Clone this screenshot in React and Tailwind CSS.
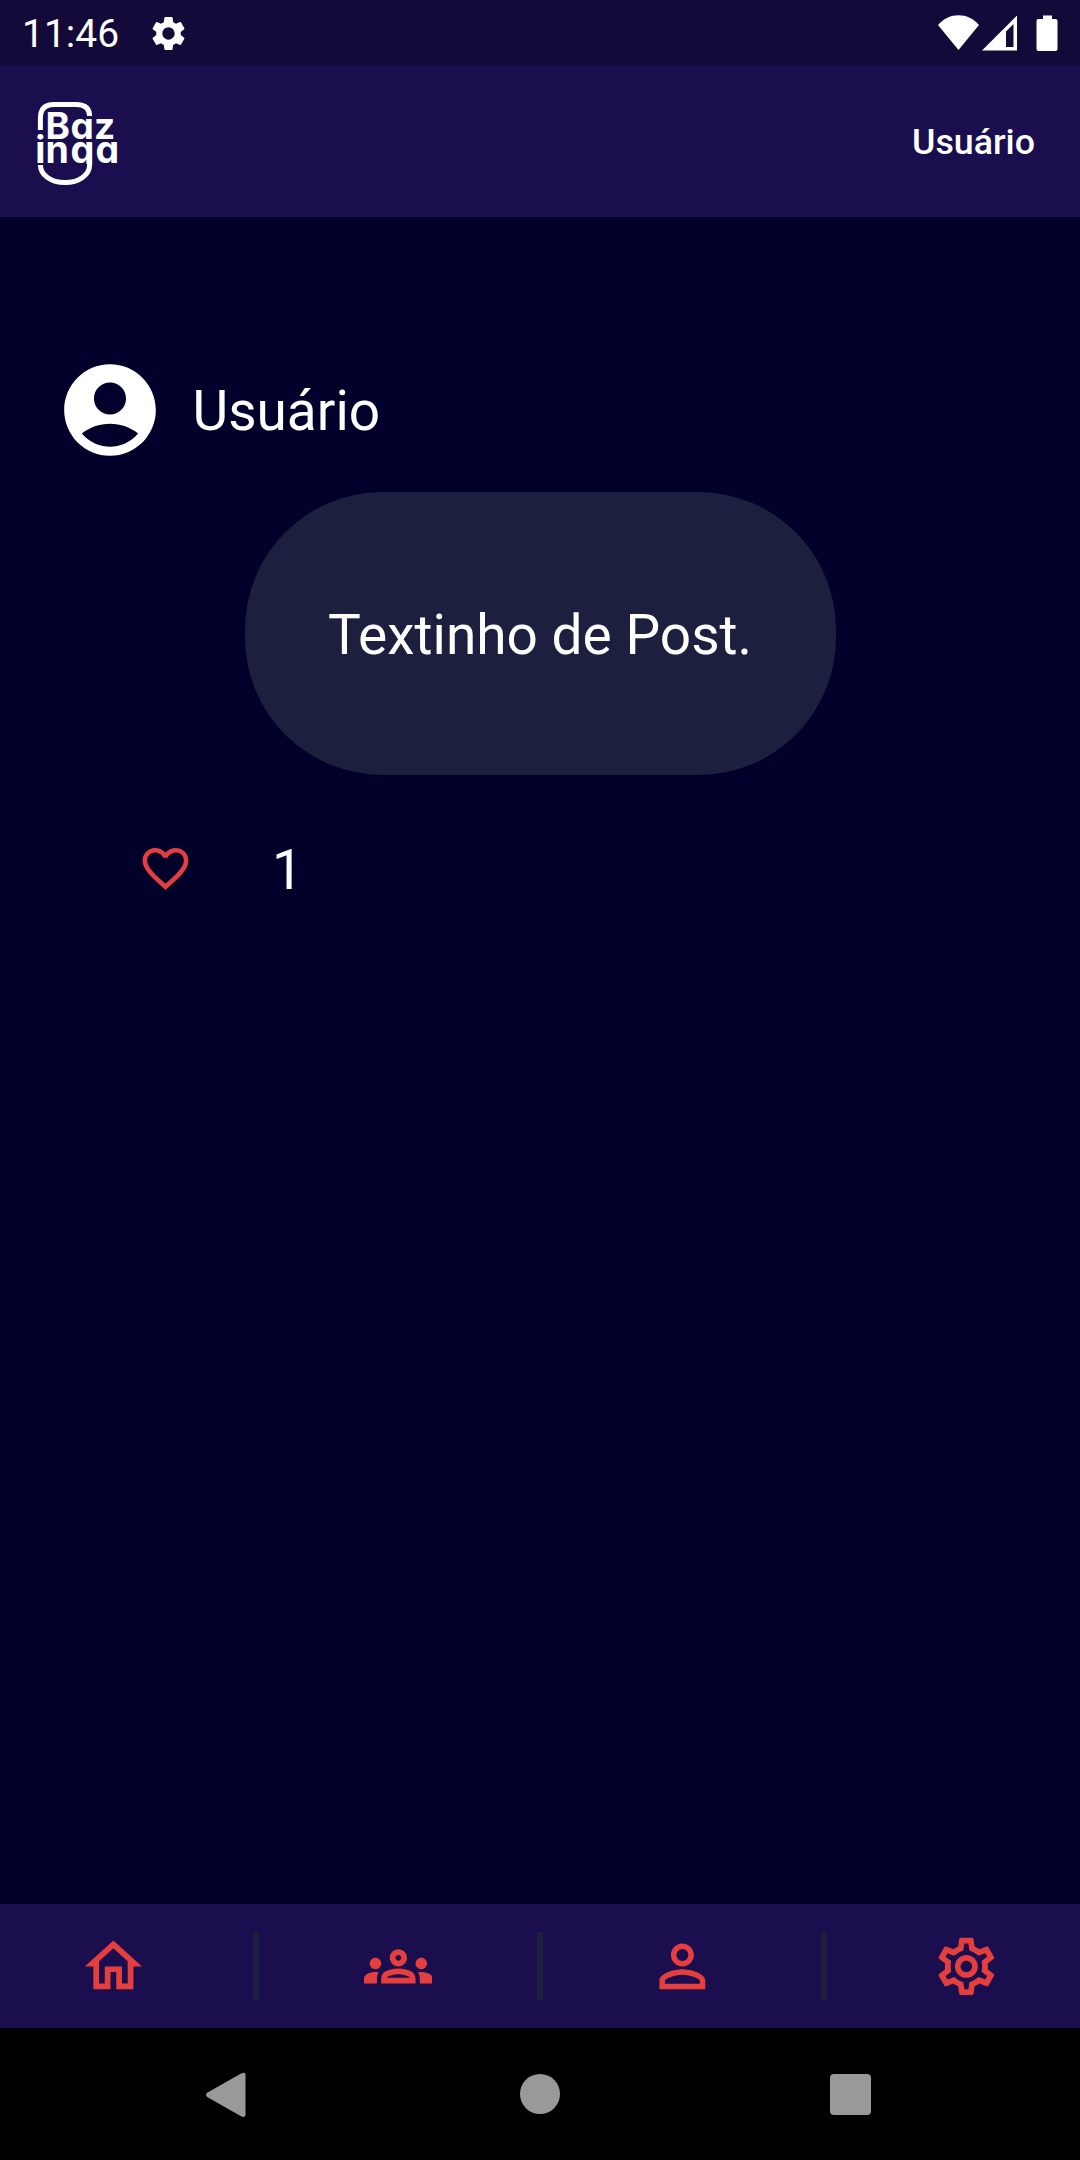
import { MdOutlineHome, MdOutlineGroups, MdPersonOutline, MdOutlineSettings, MdFavoriteBorder, MdSettings } from "react-icons/md";

function Logo() {
  return (
    <svg className="mt-[3px] h-[90px] w-[90px] text-white" viewBox="34 98 90 90" role="img" aria-label="Bazinga">
      <defs>
        <clipPath id="word-clip">
          <rect x="34" y="98" width="90" height="66" />
        </clipPath>
      </defs>
      <g fill="none" stroke="currentColor" strokeWidth="5">
        <path d="M40.400 130V118Q40.400 104.400 54 104.400H76Q89.600 104.400 89.600 116" />
        <path d="M40.400 165C40.400 175 51 182.600 65 182.600S89.600 175 89.600 165V143" />
      </g>
      <g
        fill="currentColor"
        clipPath="url(#word-clip)"
        className="font-['Inter'] text-[37.5px] font-bold [font-feature-settings:'cv11']"
      >
        <text className="text-[37px]" x="45.500 70.600 94" y="138.800">Baz</text>
        <text x="35.300 45.500 70.600 95.500" y="162.600">inga</text>
      </g>
    </svg>
  );
}

function StatusBar() {
  return (
    <div className="flex h-[66px] items-center bg-[#130a39] pl-[22px] pr-[22px] text-white">
      <span className="mt-[3px] w-[97px] text-[39px] leading-none">11:46</span>
      <MdSettings className="ml-[29px] size-[41px]" />
      <div className="ml-auto flex items-center">
        <svg className="h-[36px] w-[120px]" viewBox="0 0 120 36" fill="currentColor">
          <path d="M0 10C11-3 30-3 41 10L20.5 35Z" />
          <path fillRule="evenodd" d="M44 35.500L79 0.500V35.500ZM68 32H75.500V9L68 16.500Z" />
          <path d="M105 0.500h9v3.500h3.500q2 0 2 2v28q0 2-2 2h-17q-2 0-2-2v-28q0-2 2-2h4.500z" />
        </svg>
      </div>
    </div>
  );
}

function Header() {
  return (
    <header className="flex h-[151px] items-center justify-between bg-[#1a0e4f] pl-[34px] pr-[45px] text-white">
      <Logo />
      <span className="mt-[2px] text-[35.75px] font-medium leading-none">Usuário</span>
    </header>
  );
}

function Post() {
  return (
    <main className="flex flex-1 flex-col bg-[#02002a] pt-[138px] text-[55px] leading-[64px] text-white">
      <div className="flex h-[110px] items-center pl-[55px]">
        <svg className="size-[110px]" viewBox="0 0 24 24" fill="currentColor">
          <path d="M12 2C6.480 2 2 6.480 2 12s4.480 10 10 10 10-4.480 10-10S17.520 2 12 2zm0 4c1.930 0 3.500 1.570 3.500 3.500S13.930 13 12 13s-3.500-1.570-3.500-3.500S10.070 6 12 6zm0 14c-2.030 0-4.430-.82-6.140-2.880C7.550 15.800 9.680 15 12 15s4.450.8 6.140 2.120C16.430 19.180 14.030 20 12 20z" />
        </svg>
        <span className="ml-[27.5px] pt-[2px]">Usuário</span>
      </div>
      <div className="mt-[27px] flex h-[283px] w-[591px] items-center justify-center self-center rounded-[137.5px] bg-[#1d1f3e] pt-[2px]">
        Textinho de Post.
      </div>
      <div className="mt-[61px] flex h-[64px] items-center pl-[137.5px]">
        <MdFavoriteBorder className="size-[55px] text-[#e53e3e]" />
        <span className="ml-[79.5px] pt-[4px]">1</span>
      </div>
    </main>
  );
}

function Divider() {
  return <span className="h-[68.75px] w-[5.5px] bg-[#1d1f3e]" />;
}

function TabBar() {
  return (
    <nav className="flex h-[124px] items-center justify-between bg-[#1a0e4f] px-[79.3px] text-[68.75px] text-[#e53e3e]">
      <MdOutlineHome />
      <Divider />
      <MdOutlineGroups />
      <Divider />
      <MdPersonOutline />
      <Divider />
      <MdOutlineSettings />
    </nav>
  );
}

function SystemNav() {
  return (
    <div className="flex h-[132px] items-center bg-black pl-[206px] text-[#999]">
      <svg className="mt-[2px] h-[46px] w-[40px]" viewBox="0 0 40 46" fill="currentColor">
        <path d="M1.200 20.800L35.500 1.200Q39.500-.5 39.500 3V42Q39.500 46 35.500 44.500L1.200 25Q-1.200 23 1.200 20.800Z" />
      </svg>
      <span className="ml-[274px] size-[40px] rounded-full bg-current" />
      <span className="ml-[270px] mt-[1px] size-[41px] rounded-[4px] bg-current" />
    </div>
  );
}

export default function App() {
  return (
    <div className="flex h-[2160px] w-[1080px] flex-col overflow-hidden font-['Roboto',sans-serif]">
      <StatusBar />
      <Header />
      <Post />
      <TabBar />
      <SystemNav />
    </div>
  );
}
